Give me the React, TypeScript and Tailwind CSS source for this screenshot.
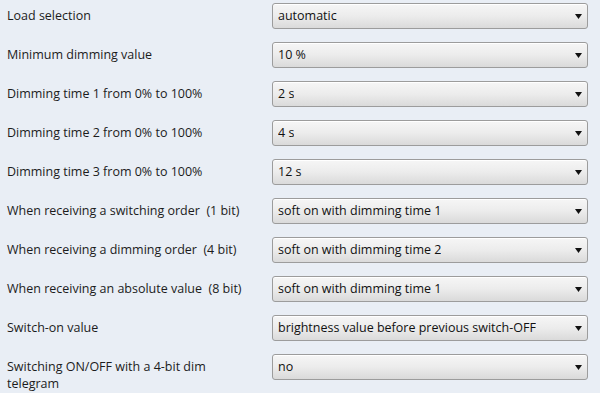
import { useState } from 'react';

type Param = { label: string; value: string };

const params: Param[] = [
  { label: 'Load selection', value: 'automatic' },
  { label: 'Minimum dimming value', value: '10 %' },
  { label: 'Dimming time 1 from 0% to 100%', value: '2 s' },
  { label: 'Dimming time 2 from 0% to 100%', value: '4 s' },
  { label: 'Dimming time 3 from 0% to 100%', value: '12 s' },
  { label: 'When receiving a switching order  (1 bit)', value: 'soft on with dimming time 1' },
  { label: 'When receiving a dimming order  (4 bit)', value: 'soft on with dimming time 2' },
  { label: 'When receiving an absolute value  (8 bit)', value: 'soft on with dimming time 1' },
  { label: 'Switch-on value', value: 'brightness value before previous switch-OFF' },
  { label: 'Switching ON/OFF with a 4-bit dim telegram', value: 'no' },
];

function Dropdown({ value }: { value: string }) {
  return (
    <button
      type="button"
      className="flex h-[26px] w-[316px] shrink-0 items-center justify-between rounded-[3px] border border-[#9c9c9c] bg-gradient-to-b from-[#f6f6f6] via-[#ececec] to-[#dadada] pl-[5px] pr-[5px] text-left text-[12.5px] text-[#111] shadow-[inset_0_1px_0_#fff]"
    >
      <span className="truncate">{value}</span>
      <svg width="7" height="5" viewBox="0 0 7 5" className="shrink-0">
        <path d="M0 0h7L3.5 5z" fill="#111" />
      </svg>
    </button>
  );
}

export default function App() {
  const [rows] = useState(params);

  return (
    <div className="h-[393px] w-[600px] overflow-hidden bg-[#e9eef5] pt-[3px] font-['Open_Sans',sans-serif]">
      <div className="flex flex-col gap-[13px]">
        {rows.map((row) => (
          <div key={row.label} className="flex items-start">
            <div className="w-[272px] shrink-0 whitespace-pre-wrap pl-[7px] pr-[22px] pt-[4px] text-[12.5px] leading-[17px] text-[#1c1c1c]">
              {row.label}
            </div>
            <Dropdown value={row.value} />
          </div>
        ))}
      </div>
    </div>
  );
}
